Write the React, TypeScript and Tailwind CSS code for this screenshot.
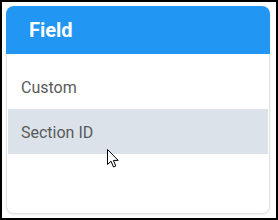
export default function App() {
  return (
    <div
      className="w-[278px] h-[220px] border-2 border-black bg-white p-[4px]"
      style={{ fontFamily: 'Roboto, "Liberation Sans", sans-serif' }}
    >
      <div className="relative w-[264px] h-[208px] rounded-[8px] border border-[#e3e3e3] bg-white shadow-[0_1px_2px_rgba(0,0,0,0.08)] flex flex-col">
        <div className="h-[48px] -mx-px -mt-px rounded-t-[8px] bg-[#2196f3] flex items-center pl-[23px]">
          <span className="text-white font-bold text-[20px] leading-none">Field</span>
        </div>
        <div className="pt-[10px] px-px flex flex-col">
          <div className="h-[45px] flex items-center pl-[13px] pt-[2px] text-[16px] text-[#5a5a5a]">Custom</div>
          <div className="h-[45px] flex items-center pl-[13px] pt-[2px] text-[16px] text-[#5a5a5a] bg-[#dbe2ea]">Section ID</div>
        </div>
        <svg
          className="absolute left-[100px] top-[142px]"
          width="14"
          height="20"
          viewBox="0 0 14 20"
        >
          <path
            d="M0.5 0.5 L0.5 15.5 L4 12.2 L6.5 18 L8.8 17 L6.4 11.4 L11.2 11.4 Z"
            fill="white"
            stroke="black"
            strokeWidth="1"
            strokeLinejoin="miter"
          />
        </svg>
      </div>
    </div>
  );
}
